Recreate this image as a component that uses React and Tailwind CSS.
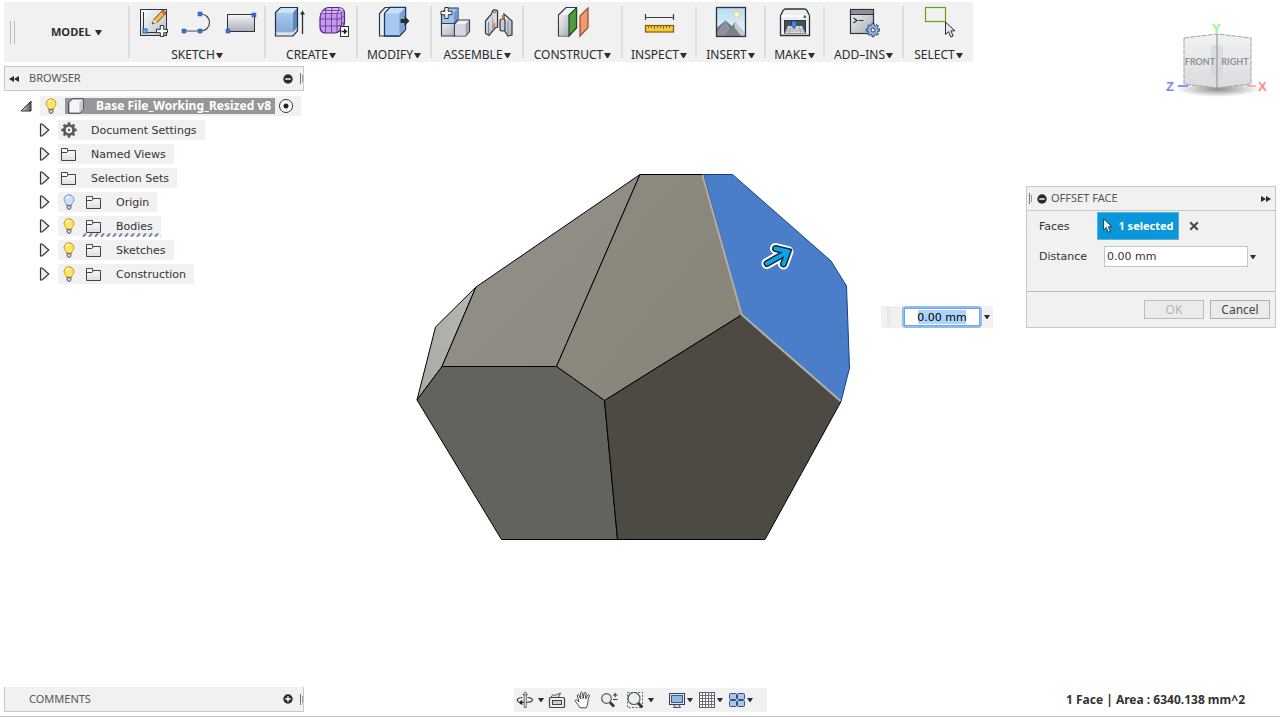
import React from "react";

function Caret({ className = "h-1 w-1.5" }) {
  return (
    <svg viewBox="0 0 8 5" preserveAspectRatio="none" className={className} aria-hidden="true">
      <path d="M0 0h8L4.6 5H3.4z" fill="#2e2e2e" />
    </svg>
  );
}

function Svg({ children, size = "h-8 w-8", box = "0 0 32 32" }) {
  return (
    <svg viewBox={box} className={`${size} shrink-0`} fill="none" aria-hidden="true">
      {children}
    </svg>
  );
}

function Defs() {
  return (
    <svg className="absolute h-0 w-0" aria-hidden="true">
      <defs>
        <linearGradient id="paper" x1="0" y1="0" x2="1" y2="1">
          <stop offset="0" stopColor="#ffffff" />
          <stop offset="1" stopColor="#b9bcc8" />
        </linearGradient>
        <linearGradient id="steel" x1="0" y1="0" x2="1" y2="1">
          <stop offset="0" stopColor="#f1f2f4" />
          <stop offset="1" stopColor="#a9adb8" />
        </linearGradient>
        <linearGradient id="sheet" x1="0" y1="0" x2="0" y2="1">
          <stop offset="0" stopColor="#f6f6f8" />
          <stop offset="1" stopColor="#a9abb9" />
        </linearGradient>
        <linearGradient id="sky" x1="0" y1="0" x2="0" y2="1">
          <stop offset="0" stopColor="#b5dcf3" />
          <stop offset="1" stopColor="#eff8fd" />
        </linearGradient>
        <linearGradient id="blueFace" x1="0" y1="0" x2="0" y2="1">
          <stop offset="0" stopColor="#a9cbee" />
          <stop offset="1" stopColor="#85aad6" />
        </linearGradient>
        <linearGradient id="folderFill" x1="0" y1="0" x2="0" y2="1">
          <stop offset="0" stopColor="#ffffff" />
          <stop offset="1" stopColor="#dcdee2" />
        </linearGradient>
        <linearGradient id="openTri" x1="0" y1="0" x2="1" y2="0">
          <stop offset="0" stopColor="#e0e0e0" />
          <stop offset="1" stopColor="#555555" />
        </linearGradient>
      </defs>
    </svg>
  );
}

function Plus({ x, y }) {
  return (
    <path
      transform={`translate(${x} ${y})`}
      d="M-1.7-5.5h3.4v3.8h3.8v3.4h-3.8v3.8h-3.4v-3.8h-3.8v-3.4h3.8z"
      fill="#fff"
      stroke="#2b3038"
      strokeWidth="1"
    />
  );
}

function Pt({ x, y }) {
  return <rect x={x - 2} y={y - 2} width="4" height="4" fill="#3b6fd4" stroke="#2a57b5" strokeWidth=".5" />;
}

const SketchIcon = () => (
  <Svg>
    <rect x="3.5" y="3.5" width="26" height="26" fill="url(#paper)" stroke="#2e3239" />
    <path d="M6.5 6v17M10 26.5h10" stroke="#2e3239" />
    <rect x="6" y="23" width="4" height="4" fill="#6fb2ee" stroke="#245f9c" />
    <path d="M15 18l2.2-5L26 4l3.2 3-8.6 9z" fill="#f3bd3d" stroke="#5a4317" strokeWidth=".9" />
    <path d="M24.3 5.6L26 4l3.2 3-1.6 1.7z" fill="#e2795c" stroke="#6d3a28" strokeWidth=".7" />
    <path d="M15 18l2-4.6 3 2.8z" fill="#fbe9c8" />
    <path d="M15 18l.8-2 1.2 1.1z" fill="#222" />
    <Plus x={25} y={25} />
  </Svg>
);

const ArcIcon = () => (
  <Svg>
    <path d="M3 25h17a8.500 8.500 0 0 0 0-17h-1" stroke="#40444c" strokeWidth="1.200" />
    <Pt x={3} y={25} />
    <Pt x={19} y={25} />
    <Pt x={19} y={8} />
  </Svg>
);

const RectIcon = () => (
  <Svg>
    <rect x="2.500" y="8.500" width="27" height="17" fill="url(#sheet)" stroke="#2e3239" />
    <Pt x={3} y={25} />
    <Pt x={29} y={9} />
  </Svg>
);

const ExtrudeIcon = () => (
  <Svg>
    <path d="M2.500 6.500l5-5h17v23.500l-4.500 5H2.500z" fill="#dfe3ea" />
    <path d="M2.500 6.500h17.500V26H2.500z" fill="url(#blueFace)" />
    <path d="M2.500 6.500l5-5h17l-4.500 5z" fill="#cfe3f7" />
    <path d="M20 6.500l4.500-5v20L20 26z" fill="#5f88bd" />
    <path d="M2.500 6.500l5-5h17v23.500l-4.500 5H2.500z" stroke="#22304d" strokeWidth="1.200" />
    <path d="M2.500 26H20l4.500-4.500" stroke="#9fb3cf" strokeWidth=".8" />
    <path d="M29.500 7v21" stroke="#2b2e34" strokeWidth="1.300" />
    <path d="M29.500 4.500l2.500 4h-5z" fill="#2b2e34" />
  </Svg>
);

const MeshIcon = () => (
  <Svg>
    <path d="M6 4.500C8 2 9 1.500 12 1.500h9c4 0 6.500 2 6.500 6v9c0 3-.5 4-3 6.500-2 2-3 4-7 4H9c-4 0-6-2-6-6v-9c0-4 1-5 3-7.500z" fill="#c796ee" stroke="#4d2a78" strokeWidth="1.200" />
    <path d="M6 5c3-2.500 5-3 8-3h8c2 0 4 1 5 3-2 2-4 3-7 3H9C6 8 5 8 3.500 9.500z" fill="#dbb9f6" />
    <path d="M3.200 13h17c3 0 5-1 7-3.500M3 20h17c3 0 5-1.500 7-4M9 2.500L8.500 9v18M15 2l-.500 6v19M22 2l-2 6v18.500M24.500 6v16.500M3.500 9C5 7.600 6 7.500 9 7.500h10c4 0 6-1 8-3M6 4.500h18" stroke="#5b3390" strokeWidth=".8" />
    <rect x="23.500" y="20.500" width="8" height="10" fill="#fff" stroke="#333" />
    <path d="M24.500 25.500h3" stroke="#222" strokeWidth="1.500" />
    <path d="M27 22.500l3.500 3-3.500 3z" fill="#222" />
  </Svg>
);

const ModifyIcon = () => (
  <Svg>
    <path d="M1.500 7.500l5.500-6h20.500v22l-6 6.500h-20z" fill="#eceef2" stroke="#343a45" strokeWidth="1.200" />
    <path d="M6.500 7.500l5.500-6h15.500v22l-6 6.500h-15z" fill="#a7c8ee" stroke="#1e3763" strokeWidth="1.300" />
    <path d="M7 7.500l5.500-5.500h14.500l-5.500 5.500z" fill="#c9def6" />
    <path d="M21.500 7.500l5.500-5.500v21.300l-5.500 6z" fill="#7ea4d6" />
    <path d="M21.500 7.500v22" stroke="#8fb1dd" />
    <path d="M22.500 13h4v-3l5 5-5 5v-3h-4z" fill="#2c2c2c" />
  </Svg>
);

const ComponentIcon = () => (
  <Svg>
    <path d="M2.500 7.500l5-5.500h11.500v11l-4 4.500H2.500z" fill="#9dc1ec" stroke="#1e3763" strokeWidth="1.200" />
    <path d="M15 7l4-4.500V13l-4 4z" fill="#6f97cf" />
    <path d="M2.500 17.500h13.500V30H2.500z" fill="url(#steel)" stroke="#3a3f49" strokeWidth="1.200" />
    <path d="M15.500 18l3.500-4h11.500v11.500L26.500 30h-11z" fill="#eff0f3" stroke="#3a3f49" strokeWidth="1.200" />
    <path d="M16 18h10.500v11.500H16z" fill="#d5d8df" />
    <path d="M26.500 18l3.500-3.500v11l-3.500 4z" fill="#a2a6b1" />
    <Plus x={7.500} y={7} />
  </Svg>
);

const JointIcon = () => (
  <Svg>
    <path d="M2.500 15l8-9.500 4-.5v16l-2 .5L6 29.500l-3.500-2z" fill="url(#steel)" stroke="#343943" strokeWidth="1.200" />
    <path d="M5.500 16v12M10 7v15" stroke="#7e838e" />
    <path d="M9 7c0-4 5.500-4 5.500-1v15l-3 1" fill="#d7dae0" stroke="#343943" strokeWidth="1.200" />
    <circle cx="11.500" cy="5.500" r="1.200" fill="#fff" stroke="#343943" strokeWidth=".8" />
    <path d="M21 8l8 7v14l-4 1-4-6z" fill="url(#steel)" stroke="#343943" strokeWidth="1.200" />
    <path d="M25 14v14" stroke="#7e838e" />
    <path d="M17 14.500c0-2 5-2 5 0v9c0 2-5 2-5 0z" fill="#c7cad2" stroke="#343943" strokeWidth="1.200" />
    <path d="M11.500 17v5M19.500 9v5" stroke="#ef7d1e" strokeWidth="1.500" />
  </Svg>
);

const ConstructIcon = () => (
  <Svg>
    <path d="M1.500 9l7.500-7.500h10.500v20L12 30H1.500z" fill="#f2f3f5" stroke="#343943" strokeWidth="1.200" />
    <path d="M2 9h10v20.500H2z" fill="url(#steel)" />
    <path d="M12 9l7.500-7v20L12 30z" fill="#4f9b42" stroke="#1f4a1e" strokeWidth="1.200" />
    <path d="M23 10l8-8v19.500L23 30z" fill="#ee9a72" stroke="#a4512d" strokeWidth="1.300" />
  </Svg>
);

const InspectIcon = () => (
  <Svg>
    <path d="M2.500 8v6M30.500 8v6M2.500 11.500h28" stroke="#3a3d43" strokeWidth="1.200" />
    <rect x="2.500" y="19.500" width="28" height="6.500" fill="#f4ca3c" stroke="#7d5c14" strokeWidth="1.200" />
    <path d="M5.500 20v2M8.500 20v2M11.500 20v3M14.500 20v2M17.500 20v2M20.500 20v3M23.500 20v2M26.500 20v2" stroke="#7d5c14" strokeWidth=".9" />
  </Svg>
);

const InsertIcon = () => (
  <Svg>
    <rect x="1.500" y="1.500" width="29" height="29" fill="url(#sky)" />
    <circle cx="22" cy="8.500" r="2.800" fill="#fffbe0" stroke="#f4ce74" strokeWidth="1.200" />
    <path d="M2 21.500L10.500 14.500 18 21v9H2z" fill="#6f7480" />
    <path d="M2 30v-4L10.500 14.500 15 22v8z" fill="#8c919c" />
    <path d="M13 30l3-7 4-7.500L30 26.500V30z" fill="#c5c9d1" />
    <path d="M10 30c3-5 5-7 6.500-9l3.500-5.500c-1 4-1 6 2 9l4 5.500z" fill="#7b808c" />
    <rect x="1.500" y="1.500" width="29" height="29" stroke="#2e3239" strokeWidth="1.300" />
  </Svg>
);

const MakeIcon = () => (
  <Svg>
    <path d="M4 4.500L6 3h20l2 1.500L30.500 10v19.500h-29V10z" fill="#eceef0" stroke="#2e3239" strokeWidth="1.300" />
    <path d="M2 10h28" stroke="#fff" strokeWidth="1.500" />
    <rect x="24.500" y="9.500" width="2.500" height="2.500" fill="#0f9b1f" />
    <rect x="5.500" y="14.500" width="21" height="12.500" fill="#4a4f5a" stroke="#2e3239" />
    <path d="M6 27l3-7h14l3 7z" fill="#dcdfe5" />
    <path d="M8 23h16M7 25h18M12 20l-2 7M20 20l2 7" stroke="#989da8" strokeWidth=".8" />
    <path d="M12.500 15h5v4.500L15 22.500l-2.500-3z" fill="#3f86dd" stroke="#1d3f73" strokeWidth=".9" />
  </Svg>
);

function gearPath(cx, cy, outer, inner, teeth) {
  const pts = [];
  const step = (Math.PI * 2) / teeth;
  for (let i = 0; i < teeth; i++) {
    const a = i * step;
    [[-0.3, inner], [-0.2, outer], [0.2, outer], [0.3, inner]].forEach(([t, r]) => {
      pts.push(`${(cx + Math.sin(a + t * step) * r).toFixed(2)} ${(cy - Math.cos(a + t * step) * r).toFixed(2)}`);
    });
  }
  return `M${pts.join("L")}Z`;
}

const AddInsIcon = () => (
  <Svg>
    <rect x="2.500" y="3.500" width="23" height="24" fill="url(#steel)" stroke="#2e3239" strokeWidth="1.200" />
    <rect x="3" y="4" width="22" height="4" fill="#8b909b" />
    <path d="M2.500 8.500h23" stroke="#2e3239" />
    <path d="M5.500 12l3.500 2.500L5.500 17M10.500 14.500h5" stroke="#2e3239" strokeWidth="1.200" />
    <path d={gearPath(25, 24, 6.8, 5, 8)} fill="#9ab5da" stroke="#27456f" />
    <circle cx="25" cy="24" r="2" fill="#fff" stroke="#27456f" />
  </Svg>
);

function Cursor({ x = 0, y = 0, light = false }) {
  return (
    <path
      transform={`translate(${x} ${y})`}
      d="M0 0v12.500l3-2.800 2.300 5.300 2.400-1-2.300-5.200h4z"
      fill={light ? "#f4f6f8" : "#e4e6ea"}
      stroke="#2b2e34"
    />
  );
}

const SelectIcon = () => (
  <Svg>
    <rect x="2.500" y="1.500" width="20" height="14" stroke="#62a50e" strokeWidth="1.200" />
    <Cursor x={22.5} y={16} />
  </Svg>
);

const groups = [
  { name: "SKETCH", width: "w-[136px]", icons: [SketchIcon, ArcIcon, RectIcon] },
  { name: "CREATE", width: "w-[92px]", icons: [ExtrudeIcon, MeshIcon] },
  { name: "MODIFY", width: "w-[74px]", icons: [ModifyIcon] },
  { name: "ASSEMBLE", width: "w-[92px]", icons: [ComponentIcon, JointIcon] },
  { name: "CONSTRUCT", width: "w-[99px]", icons: [ConstructIcon] },
  { name: "INSPECT", width: "w-[74px]", icons: [InspectIcon] },
  { name: "INSERT", width: "w-[69px]", icons: [InsertIcon] },
  { name: "MAKE", width: "w-[59px]", icons: [MakeIcon] },
  { name: "ADD–INS", width: "w-[79px]", icons: [AddInsIcon] },
  { name: "SELECT", width: "w-[71px]", icons: [SelectIcon] },
];

function Toolbar() {
  return (
    <header className="flex h-[60px] w-max bg-[#f1f1f1] font-['Noto_Sans',sans-serif] text-xs text-[#2b2b2b]">
      <div className="flex w-[124px] items-center pl-1.5">
        <span className="h-[23px] w-[5px] border-x border-[#bdbdbd]" />
        <button type="button" className="ml-9 flex items-center gap-1 font-['Open_Sans',sans-serif] text-[11px] font-bold">
          MODEL <Caret className="h-[5px] w-[7px]" />
        </button>
      </div>
      {groups.map((g) => (
        <section key={g.name} className={`${g.width} flex shrink-0`}>
          <span className="my-1 w-0.5 bg-[#dedede]" />
          <div className="flex flex-1 flex-col items-center pt-1">
            <div className="flex gap-3">
              {g.icons.map((Icon, i) => (
                <button type="button" key={i} aria-label={`${g.name} ${i + 1}`}>
                  <Icon />
                </button>
              ))}
            </div>
            <button type="button" className="mt-2 flex items-center gap-px pt-px leading-4">
              {g.name} <Caret className="h-[5px] w-[7px]" />
            </button>
          </div>
        </section>
      ))}
    </header>
  );
}

function Bulb({ off }) {
  return (
    <Svg size="h-4 w-3" box="0 0 12 16">
      <path
        d="M6 .8a4.900 4.900 0 0 0-5 4.900c0 2.500 2.300 3.300 2.600 5.500h4.800C8.700 9 11 8.200 11 5.700A4.900 4.900 0 0 0 6 .8z"
        fill={off ? "#cfe0fb" : "#ffe45c"}
        stroke={off ? "#7b92c8" : "#c39a25"}
      />
      <path d="M3.500 4.500A3 3 0 0 1 6 2.500" stroke="#fff" strokeWidth="1.300" />
      <path d="M4 11.500h4v2.500L7 15.300H5L4 14z" fill="#c9ccd2" stroke="#555b66" strokeWidth=".9" />
    </Svg>
  );
}

function Folder() {
  return (
    <Svg size="h-4 w-4" box="0 0 16 16">
      <path d="M.5 14.500v-12h6v2h8v10z" fill="url(#folderFill)" stroke="#40444d" />
      <path d="M1 6.500h5l1.500-2" stroke="#40444d" />
    </Svg>
  );
}

function Gear() {
  return (
    <Svg size="h-4 w-4" box="0 0 16 16">
      <path d={gearPath(8, 8, 7.8, 6, 8)} fill="#5a5a5a" />
      <circle cx="8" cy="8" r="3.200" fill="#f1f1f1" />
      <circle cx="8" cy="8" r="1.200" fill="#5a5a5a" />
    </Svg>
  );
}

function SmallCube() {
  return (
    <Svg size="h-4 w-4" box="0 0 16 16">
      <path d="M.8 4.500L4.500.8h10.700v10.700l-3.700 3.700H.8z" fill="#f4f5f7" stroke="#33373f" />
      <path d="M11.500 4.500L15 1v10.500L11.500 15z" fill="#c6c9d0" />
    </Svg>
  );
}

function ClosedTri() {
  return (
    <Svg size="h-3.5 w-3" box="0 0 12 14">
      <path d="M1.500 1v12h1.600l6.700-6L3.100 1z" fill="#ededed" stroke="#333" strokeWidth="1.200" />
    </Svg>
  );
}

const tree = [
  { label: "Document Settings", icon: Gear },
  { label: "Named Views", icon: Folder },
  { label: "Selection Sets", icon: Folder },
  { label: "Origin", icon: Folder, bulb: "off" },
  { label: "Bodies", icon: Folder, bulb: "on", marked: true },
  { label: "Sketches", icon: Folder, bulb: "on" },
  { label: "Construction", icon: Folder, bulb: "on" },
];

function RoundSign({ plus }) {
  return (
    <Svg size="h-2.5 w-2.5" box="0 0 10 10">
      <circle cx="5" cy="5" r="4.700" fill="#2b2b2b" />
      <path d={plus ? "M2.300 5h5.400M5 2.300v5.400" : "M2.300 5h5.400"} stroke="#fff" strokeWidth="1.400" />
    </Svg>
  );
}

function Grip() {
  return (
    <span className="flex items-center gap-px" aria-hidden="true">
      <span className="h-[11px] w-px bg-[#777]" />
      <span className="h-[7px] w-px bg-[#999]" />
    </span>
  );
}

function Browser() {
  return (
    <aside className="w-[300px] text-[11px] text-[#333]">
      <div className="flex h-[25px] items-center border border-[#c8c8c8] bg-[#f1f1f1] pl-1 font-['Noto_Sans',sans-serif] text-[#555]">
        <button type="button" aria-label="Collapse browser">
          <Svg size="h-1.5 w-2.5" box="0 0 10 6">
            <path d="M5 0v6L0 3zM10 0v6L5 3z" fill="#2b2b2b" />
          </Svg>
        </button>
        <h2 className="ml-2.5 flex-1">BROWSER</h2>
        <button type="button" aria-label="Minimize browser" className="mr-[7px]">
          <RoundSign />
        </button>
        <Grip />
      </div>
      <div className="mt-1 flex flex-col gap-1 pt-px">
        <div className="flex h-5 items-center pl-4 whitespace-nowrap">
          <button type="button" aria-label="Collapse file" className="mr-2">
            <Svg size="h-3 w-3" box="0 0 12 12">
              <path d="M11 1v10H1z" fill="url(#openTri)" stroke="#333" />
            </Svg>
          </button>
          <div className="flex h-5 items-center bg-[#f1f1f1] pr-2 pl-[5px]">
            <Bulb />
            <div className="ml-2 flex h-4 items-center bg-[#979797] pr-1 pl-[3px] font-['Noto_Sans',sans-serif] text-xs font-bold text-white">
              <SmallCube />
              <span className="ml-3">Base File_Working_Resized v8</span>
            </div>
            <label className="ml-1 flex">
              <input
                type="radio"
                defaultChecked
                aria-label="Active component"
                className="h-3.5 w-3.5 appearance-none rounded-full border border-[#333] bg-white bg-[radial-gradient(circle,#222_0_2px,transparent_3px)]"
              />
            </label>
          </div>
        </div>
        {tree.map((n) => (
          <div key={n.label} className="flex h-5 items-center pl-[35px] font-['DejaVu_Sans',sans-serif]">
            <button type="button" aria-label={`Expand ${n.label}`} className="mr-[7px]">
              <ClosedTri />
            </button>
            <div className="flex h-5 items-center bg-[#f1f1f1] pr-2 pl-[3px]">
              {n.bulb && (
                <span className="mr-[11px] pl-0.5">
                  <Bulb off={n.bulb === "off"} />
                </span>
              )}
              <span className="relative flex items-center">
                <n.icon />
                <span className="ml-3.5 pt-0.5">{n.label}</span>
                {n.marked && (
                  <svg className="absolute -bottom-0.5 -left-1 h-1 w-[calc(100%+12px)]" aria-hidden="true">
                    <defs>
                      <pattern id="hatch" width="6" height="4" patternUnits="userSpaceOnUse">
                        <path d="M1 4L4 .3" stroke="#7689ab" strokeWidth="2" />
                      </pattern>
                    </defs>
                    <rect width="100%" height="4" fill="url(#hatch)" />
                  </svg>
                )}
              </span>
            </div>
          </div>
        ))}
      </div>
    </aside>
  );
}

function ViewCube() {
  return (
    <svg viewBox="0 0 106 76" className="h-[76px] w-[106px]" role="img" aria-label="View cube">
      <defs>
        <radialGradient id="cubeShadow">
          <stop offset="0" stopColor="#000" stopOpacity=".45" />
          <stop offset="1" stopColor="#000" stopOpacity="0" />
        </radialGradient>
        <linearGradient id="cubeFace" x1="0" y1="0" x2="0" y2="1">
          <stop offset="0" stopColor="#f1f2f3" />
          <stop offset="1" stopColor="#dadbdd" />
        </linearGradient>
      </defs>
      <ellipse cx="53" cy="67" rx="42" ry="8" fill="url(#cubeShadow)" />
      <path d="M19 16l33-4v54l-33-4z" fill="url(#cubeFace)" />
      <path d="M52 12l34 4v46l-34 4z" fill="url(#cubeFace)" />
      <path d="M46 24l6-2 6 2v31l-6 2-6-2z" fill="#d3d7de" opacity=".7" />
      <path d="M19 16l33-4 34 4v46l-34 4-33-4z" fill="none" stroke="#a2a2a2" strokeDasharray="5 1" />
      <path d="M52 12v54" stroke="#8c8c8c" />
      <g className="font-['Lato',sans-serif] text-[9px] font-bold" fill="#8f9399">
        <text x="35" y="43" textAnchor="middle">FRONT</text>
        <text x="70" y="43" textAnchor="middle">RIGHT</text>
      </g>
      <path d="M13 64h10" stroke="#6b6bff" strokeWidth="1.500" />
      <path d="M82 64h9" stroke="#ff9a9a" strokeWidth="1.500" />
      <g className="font-['Liberation_Sans',sans-serif] text-[13px] font-bold">
        <text x="1" y="69" fill="#8080ff">Z</text>
        <text x="93" y="69" fill="#ff8a8a">X</text>
        <text x="47" y="11" fill="#8dfa8d">Y</text>
      </g>
    </svg>
  );
}

function OffsetDialog() {
  return (
    <form className="w-[250px] border border-[#c8c8c8] bg-[#f1f1f1] font-['DejaVu_Sans',sans-serif] text-[11px] text-[#333]" onSubmit={(e) => e.preventDefault()}>
      <div className="flex h-6 items-center border-b border-[#c8c8c8] pr-1 pl-0.5 font-['Noto_Sans',sans-serif] text-[#555]">
        <Grip />
        <button type="button" aria-label="Collapse dialog" className="ml-[5px]">
          <RoundSign />
        </button>
        <h2 className="ml-1 flex-1">OFFSET FACE</h2>
        <button type="button" aria-label="Dock dialog">
          <Svg size="h-1.5 w-2.5" box="0 0 10 6">
            <path d="M0 0l5 3-5 3zM5 0l5 3-5 3z" fill="#2b2b2b" />
          </Svg>
        </button>
      </div>
      <div className="flex h-[81px] flex-col gap-1.5 border-b border-[#bdbdbd] pt-px pl-3">
        <div className="flex items-center">
          <span className="w-[58px] pt-0.5">Faces</span>
          <button type="button" className="flex h-7 w-[82px] items-center justify-center gap-1 border border-[#4fb4e6] bg-[#0a96d8] font-bold text-white">
            <Svg size="h-4 w-3" box="-1 -1 12 18">
              <Cursor light />
            </Svg>
            <span className="font-['Noto_Sans',sans-serif]">1 selected</span>
          </button>
          <button type="button" aria-label="Clear selection" className="ml-2.5">
            <Svg size="h-2.5 w-2.5" box="0 0 10 10">
              <path d="M1.200 1.200l7.600 7.600M8.800 1.200L1.200 8.800" stroke="#4d4d4d" strokeWidth="2.200" />
            </Svg>
          </button>
        </div>
        <div className="flex items-center">
          <label htmlFor="distance" className="w-[65px] pt-0.5">Distance</label>
          <input id="distance" defaultValue="0.00 mm" className="h-[21px] w-36 border border-[#c4c4c4] bg-white px-0.5 outline-none" />
          <button type="button" aria-label="Distance options" className="ml-0.5">
            <Caret />
          </button>
        </div>
      </div>
      <div className="flex h-[35px] items-center justify-end gap-1.5 pr-[5px] font-['Noto_Sans',sans-serif] text-xs text-[#444]">
        <button type="button" disabled className="h-[19px] w-[60px] border border-[#bcbcbc] bg-[#ebebeb] leading-none text-[#b5b5b5]">OK</button>
        <button type="submit" className="h-[19px] w-[60px] border border-[#b0b0b0] bg-[#ebebeb] leading-none">Cancel</button>
      </div>
    </form>
  );
}

const ARROW = "M767 263.500L788 251.500M775.500 248.500L788 251.500 783.500 264";

function Model() {
  return (
    <svg viewBox="410 170 444 374" className="absolute top-[170px] left-[410px] h-[374px] w-[444px]" role="img" aria-label="Solid body">
      <defs>
        <linearGradient id="faceA" x1="0" y1="0" x2="1" y2="1">
          <stop offset="0" stopColor="#938f87" />
          <stop offset="1" stopColor="#8f8a81" />
        </linearGradient>
        <linearGradient id="faceB" x1="0" y1="0" x2="1" y2="1">
          <stop offset="0" stopColor="#8f8b81" />
          <stop offset="1" stopColor="#888377" />
        </linearGradient>
        <linearGradient id="faceC" x1="0" y1="0" x2="1" y2="0">
          <stop offset="0" stopColor="#a8aaa3" />
          <stop offset="1" stopColor="#b5b7b0" />
        </linearGradient>
      </defs>
      <g stroke="#000" strokeWidth="1" strokeLinejoin="round">
        <path d="M435.500 327L476 287l-34 79.500-25 33.500z" fill="url(#faceC)" />
        <path d="M476 287L640 174.500l-83.500 192H442z" fill="url(#faceA)" />
        <path d="M640 174.500h63L741.500 315l-137 85.500-48-34z" fill="url(#faceB)" />
        <path d="M442 366.500h114.500l48 34L617.500 539.500h-116L417 400z" fill="#62635d" />
        <path d="M604.500 400.500l137-85.500L841 401.500l-76 138H617.500z" fill="#4d4a43" />
      </g>
      <path d="M703.500 174.500h29L831 261l15.500 25 3 82-8.500 33.500L741.500 315z" fill="#4b7ec8" stroke="#153f86" strokeWidth="1" />
      <path d="M702.500 175l39 139.500 99 86.500" fill="none" stroke="#b5aea6" strokeWidth="2" />
      <g fill="none" strokeLinejoin="miter" strokeLinecap="round">
        <path d={ARROW} stroke="#fff" strokeWidth="11" strokeLinejoin="round" />
        <path d={ARROW} stroke="#132a38" strokeWidth="7" />
        <path d={ARROW} stroke="#0ba4ea" strokeWidth="4" />
      </g>
    </svg>
  );
}

function FloatingInput() {
  return (
    <div className="absolute top-[306px] left-[881px] flex h-[22px] items-center bg-[#f1f1f1] pr-[3px] pl-1.5">
      <svg className="h-5 w-1" viewBox="0 0 4 20" aria-hidden="true">
        <path d="M1 0v20M3 1v19" stroke="#c9c9c9" strokeDasharray="1 1.500" />
      </svg>
      <div className="ml-[11px] flex h-[22px] w-20 rounded-sm bg-[#8ebcf5] p-0.5">
        <div className="relative flex flex-1 items-center justify-center border border-[#70a4e4] bg-white">
          <span className="absolute h-3.5 w-12 bg-[#add3fb]" />
          <input
            aria-label="Offset distance"
            defaultValue="0.00 mm"
            className="relative w-full bg-transparent pt-0.5 text-center font-['DejaVu_Sans',sans-serif] text-[11px] text-black outline-none"
          />
        </div>
      </div>
      <button type="button" aria-label="Offset options" className="ml-0.5">
        <Caret />
      </button>
    </div>
  );
}

const navIcons = {
  orbit: (
    <Svg size="h-[18px] w-[18px]" box="0 0 18 18">
      <path d="M11.500 6.500c3.200.3 5 1.200 5 2.300 0 1.500-3.500 2.700-8 2.700H5M6.500 6.500C3.500 6.800 1.200 7.700 1.200 9c0 .7.600 1.200 1.500 1.700" stroke="#333" strokeWidth="1.100" />
      <path d="M8.200 3.500h2v13h-2z" fill="#fff" stroke="#555" strokeWidth=".9" />
      <path d="M9.200.8l2.300 3h-4.600z" fill="#fff" stroke="#555" strokeWidth=".9" />
      <path d="M2.500 11.500L6.300 8.800v5.400z" fill="#222" />
    </Svg>
  ),
  look: (
    <Svg size="h-[18px] w-[18px]" box="0 0 18 18">
      <path d="M2.500 6.500L5 3.500l1.500 1 6-2.500-2 4.500" fill="#ddd" stroke="#555" />
      <rect x="1.500" y="6.500" width="15" height="10" rx="1" fill="#eee" stroke="#444" strokeWidth="1.200" />
      <rect x="4.500" y="9.500" width="9" height="4" fill="#c8cdd6" stroke="#444" />
    </Svg>
  ),
  pan: (
    <Svg size="h-[18px] w-[18px]" box="0 0 18 18">
      <path
        d="M6 16.800C4.500 14 3 12.500 1.500 10.500c-.8-1.300.6-2 1.700-1.100L5 11 3.300 4.800c-.3-1.400 1.300-1.800 1.700-.5L6.800 8 6.500 2.300c0-1.400 1.800-1.400 2 0L9.200 7.500l1-5.300c.3-1.300 2-.9 1.800.4L11.600 8l2-3.800c.6-1.200 2.200-.4 1.700.8-1 2.500-1.300 4-1.500 6.500-.2 2.300-1 3.500-1.500 5.300z"
        fill="#fff"
        stroke="#444"
      />
    </Svg>
  ),
  zoom: (
    <Svg size="h-[18px] w-[18px]" box="0 0 18 18">
      <circle cx="6.500" cy="7.500" r="4.800" fill="#e5f0f2" stroke="#555b62" strokeWidth="1.200" />
      <path d="M10 11.500l4 4" stroke="#333" strokeWidth="2.600" />
      <path d="M13 4h4.500M15.200 1.800v4.500M13 8.500h4.500" stroke="#333" />
    </Svg>
  ),
  fit: (
    <Svg size="h-[18px] w-[18px]" box="0 0 18 18">
      <rect x="1.500" y="1.500" width="15" height="15" stroke="#666" strokeDasharray="2 1.500" />
      <circle cx="8" cy="7.500" r="6" fill="#e5f2ef" stroke="#555b62" strokeWidth="1.200" />
      <path d="M12.300 12.300l4 4" stroke="#333" strokeWidth="2.800" />
    </Svg>
  ),
  display: (
    <Svg size="h-[18px] w-[18px]" box="0 0 18 18">
      <rect x="1.500" y="2.500" width="15" height="11" fill="#e4e7ec" stroke="#3b4049" />
      <rect x="3.500" y="4.500" width="11" height="7" fill="#91b7ea" stroke="#35598f" />
      <path d="M7 13.500h4l1.500 3h-7z" fill="#d5d8dd" stroke="#3b4049" strokeWidth=".9" />
    </Svg>
  ),
  grid: (
    <Svg size="h-[18px] w-[18px]" box="0 0 18 18">
      <rect x="1.500" y="1.500" width="15" height="15" fill="#fff" stroke="#555a62" />
      <path d="M4.500 1v16M7.500 1v16M10.500 1v16M13.500 1v16M1 4.500h16M1 7.500h16M1 10.500h16M1 13.500h16" stroke="#6b7079" />
    </Svg>
  ),
  views: (
    <Svg size="h-[18px] w-[18px]" box="0 0 18 18">
      <g fill="#a9c5ea" stroke="#2f4f85">
        <rect x="1.500" y="2.500" width="7" height="6" rx="1" />
        <rect x="9.500" y="2.500" width="7" height="6" rx="1" />
        <rect x="1.500" y="9.500" width="7" height="6" rx="1" />
        <rect x="9.500" y="9.500" width="7" height="6" rx="1" />
      </g>
    </Svg>
  ),
};

function NavButton({ name, menu, gap = "gap-px" }) {
  return (
    <button type="button" aria-label={name} className={`flex items-center ${gap}`}>
      {navIcons[name]}
      {menu && <Caret />}
    </button>
  );
}

function Footer() {
  return (
    <footer className="grid grid-cols-[1fr_auto_1fr] border-b border-[#c4c4c4] px-1 pb-1">
      <div className="flex h-[25px] w-[300px] items-center border-x border-b border-[#c8c8c8] bg-[#f1f1f1] pl-6 font-['Noto_Sans',sans-serif] text-[11px] text-[#555]">
        <h2 className="flex-1">COMMENTS</h2>
        <button type="button" aria-label="Expand comments" className="mr-[7px]">
          <RoundSign plus />
        </button>
        <Grip />
      </div>
      <nav className="mt-px flex h-6 items-center bg-[#f1f1f1] pr-3.5 pl-0.5">
        <div className="flex items-center gap-1">
          <NavButton name="orbit" menu gap="gap-1" />
          <div className="flex items-center gap-2">
            <NavButton name="look" />
            <NavButton name="pan" />
            <NavButton name="zoom" />
            <NavButton name="fit" menu gap="gap-1" />
          </div>
        </div>
        <div className="ml-3.5 flex items-center gap-[5px]">
          <NavButton name="display" menu />
          <NavButton name="grid" menu />
          <NavButton name="views" menu />
        </div>
      </nav>
      <p className="self-center pr-[31px] text-right font-['Noto_Sans',sans-serif] text-xs font-bold text-[#333]">
        1 Face | Area : 6340.138 mm^2
      </p>
    </footer>
  );
}

export default function App() {
  return (
    <div className="relative flex min-h-screen flex-col overflow-hidden bg-white">
      <Defs />
      <Model />
      <FloatingInput />
      <div className="relative flex flex-1 items-start justify-between pt-0.5 pl-1">
        <div className="flex flex-col gap-1">
          <Toolbar />
          <Browser />
        </div>
        <div className="flex flex-col items-end gap-[88px] pt-5 pr-1">
          <div className="pr-[5px]">
            <ViewCube />
          </div>
          <OffsetDialog />
        </div>
      </div>
      <div className="relative">
        <Footer />
      </div>
    </div>
  );
}
